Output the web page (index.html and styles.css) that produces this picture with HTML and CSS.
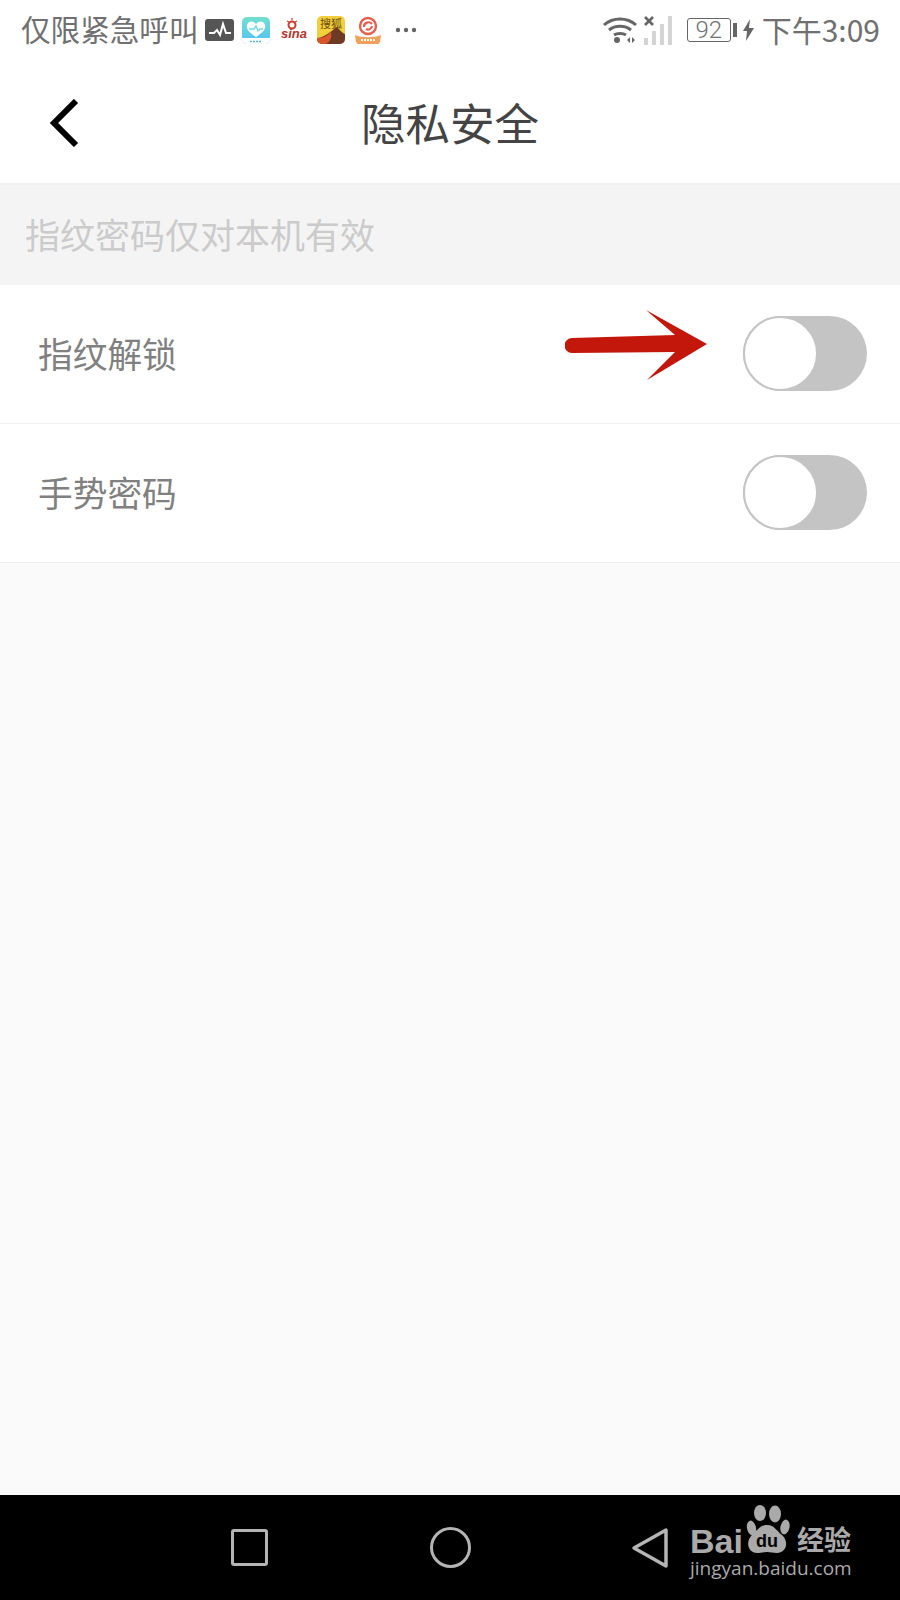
FILE: index.html
```html
<!DOCTYPE html>
<html>
  <head>
  <meta charset="utf-8">
  <title>隐私安全</title>
  <link rel="stylesheet" href="styles.css">
  </head>
  <body>
    <div class="phone">
      <div class="statusbar">
        <div class="status-left">
          <span class="carrier">仅限紧急呼叫</span>
          <svg class="ico-pulse" width="29" height="22" viewBox="0 0 29 22"><rect width="29" height="22" rx="3" fill="#555"/><path d="M4 14h5l3-3 3 5 3-11 3 9h5" fill="none" stroke="#fff" stroke-width="2"/></svg>
          <svg class="ico-heart" width="28" height="27" viewBox="0 0 28 27"><defs><linearGradient id="heartbg" x1="0" y1="0" x2="0" y2="1"><stop offset="0" stop-color="#72e0cc"/><stop offset="0.8" stop-color="#58c6f0"/></linearGradient></defs><rect width="28" height="27" rx="5" fill="url(#heartbg)"/><path d="M0 21h28v1a5 5 0 0 1-5 5H5a5 5 0 0 1-5-5z" fill="#fff"/><path d="M14 20C7 15 4 12 5 8c1-4 6-5 9-1 3-4 8-3 9 1 1 4-2 7-9 12z" fill="#fff"/><path d="M7 12h5l2-3 2 5 2-2h3" fill="none" stroke="#6fd8e0" stroke-width="1.4"/><path d="M8 24.500h12" stroke="#58b8d8" stroke-width="1.500" stroke-dasharray="2 1"/></svg>
          <svg class="ico-sina" width="26" height="24" viewBox="0 0 26 24"><circle cx="11" cy="7" r="3.500" fill="none" stroke="#cc3a2c" stroke-width="2"/><path d="M6 3l2 1M11 0v2M16 3l-2 1" stroke="#cc3a2c" stroke-width="1.200"/><text x="0" y="20" class="sina-text">sina</text></svg>
          <svg class="ico-sohu" width="28" height="28" viewBox="0 0 28 28"><rect width="28" height="28" rx="5" fill="#f3cf3e"/><path d="M0 22C7 22 14 15 20 11c3 3 5 6 8 7v5a5 5 0 0 1-5 5H5a5 5 0 0 1-5-5z" fill="#6e3a24"/><path d="M0 22c8 0 10-3 14-6 1 5 0 9-5 12H5a5 5 0 0 1-5-5z" fill="#d9562c"/><text x="14" y="12" class="sohu-text">搜狐</text></svg>
          <svg class="ico-fire" width="28" height="28" viewBox="0 0 28 28"><circle cx="14" cy="10" r="8" fill="none" stroke="#e2604c" stroke-width="2.400"/><path d="M10 11a4.500 4.500 0 0 1 8-3M18 10a4 4 0 0 1-6 3" fill="none" stroke="#e2604c" stroke-width="2.200"/><path d="M1 19c7 3 19 3 26 0l-1 7a3 3 0 0 1-3 2H5a3 3 0 0 1-3-2z" fill="#f0a05a"/><path d="M7 24h14" stroke="#fff" stroke-width="2" stroke-dasharray="2 1"/></svg>
          <svg class="ico-more" width="22" height="6" viewBox="0 0 22 6"><circle cx="3" cy="3" r="2.200"/><circle cx="11" cy="3" r="2.200"/><circle cx="19" cy="3" r="2.200"/></svg>
        </div>
        <div class="status-right">
          <svg class="ico-wifi" width="34" height="28" viewBox="0 0 34 28"><path d="M1 9c9-8 23-8 32 0M6 14c6-5 16-5 22 0M11 19c3-2 9-2 12 0" fill="none" stroke="#666" stroke-width="3"/><circle cx="14" cy="24" r="3" fill="#666"/><path d="M24 24l3-3v6zM29 21l3 3-3 3z" fill="#666"/></svg>
          <svg class="ico-signal" width="30" height="30" viewBox="0 0 30 30"><path d="M1 2l8 8M9 2l-8 8" stroke="#666" stroke-width="2.600"/><rect x="0" y="23" width="4" height="7" fill="#d4d4d4"/><rect x="8" y="16" width="4" height="14" fill="#d4d4d4"/><rect x="16" y="9" width="4" height="21" fill="#d4d4d4"/><rect x="24" y="1" width="4" height="29" fill="#d4d4d4"/></svg>
          <div class="battery"><span class="battery-body">92</span><span class="battery-cap"></span></div>
          <svg class="ico-bolt" width="11" height="22" viewBox="0 0 11 22"><path d="M7 0L0 12h4l-1 10 8-13H6z" fill="#666"/></svg>
          <span class="clock">下午3:09</span>
        </div>
      </div>

      <div class="navbar">
        <svg class="back" width="30" height="48" viewBox="0 0 30 48"><path d="M27 2L5 24l22 22" fill="none" stroke="#000" stroke-width="6"/></svg>
        <h1 class="title">隐私安全</h1>
      </div>

      <div class="hint">指纹密码仅对本机有效</div>

      <div class="row">
        <span class="label">指纹解锁</span>
        <svg class="arrow" width="146" height="74" viewBox="0 0 146 74"><path d="M7 31L110 28 81 3 142 37 82 73 110 45 7 46A7.500 7.500 0 0 1 7 31z" fill="#c4170c"/></svg>
        <div class="toggle"><div class="knob"></div></div>
      </div>
      <div class="row">
        <span class="label">手势密码</span>
        <div class="toggle"><div class="knob"></div></div>
      </div>

      <div class="blank"></div>

      <div class="navkeys">
        <span class="key-square"></span>
        <span class="key-circle"></span>
        <svg class="key-back" width="38" height="42" viewBox="0 0 38 42"><path d="M35 3v36L3 21z" fill="none" stroke="#b4b4b4" stroke-width="3.500" stroke-linejoin="round"/></svg>
        <div class="watermark">
          <div class="wm-top">
            <span class="wm-bai">Bai</span>
            <svg class="wm-paw" width="44" height="48" viewBox="0 0 44 48"><ellipse cx="5.500" cy="23" rx="4.500" ry="7.500" fill="#aaa" transform="rotate(-12 5.500 23)"/><ellipse cx="14" cy="8" rx="6" ry="8" fill="#aaa"/><ellipse cx="29" cy="9" rx="6" ry="8.500" fill="#aaa"/><ellipse cx="39" cy="22" rx="4.500" ry="7.500" fill="#aaa" transform="rotate(12 39 22)"/><path d="M21 20c7 0 9 5 15 10 7 6 5 18-5 18-4 0-6-1-10-1s-6 1-10 1C2 48-1 37 6 30c6-5 8-10 15-10z" fill="#aaa"/><text x="21" y="42" class="wm-du">du</text></svg>
            <span class="wm-cn">经验</span>
          </div>
          <div class="wm-url">jingyan.baidu.com</div>
        </div>
      </div>
    </div>
  </body>
</html>
```

FILE: styles.css
```css
html, body {
  margin: 0;
  padding: 0;
}
body {
  font-family: "Noto Sans CJK SC", "Liberation Sans", sans-serif;
}
.phone {
  width: 900px;
  height: 1600px;
  display: flex;
  flex-direction: column;
  background: #fafafa;
  overflow: hidden;
}

/* status bar */
.statusbar {
  height: 60px;
  flex: none;
  background: #fff;
  display: flex;
  justify-content: space-between;
  align-items: center;
  padding: 0 20px 0 21px;
  color: #707070;
}
.status-left, .status-right {
  display: flex;
  align-items: center;
}
.carrier {
  font-size: 29.600px;
  line-height: 40px;
  margin: -2px 6px 0 0;
}
.ico-heart { margin-left: 8px; }
.ico-sina { margin-left: 11px; }
.ico-sohu { margin-left: 10px; }
.ico-fire { margin-left: 9px; }
.ico-more { margin-left: 13px; fill: #666; }
.sina-text {
  font-family: "Liberation Sans", sans-serif;
  font-size: 13px;
  font-style: italic;
  font-weight: bold;
  fill: #b5342a;
}
.sohu-text {
  font-size: 11px;
  text-anchor: middle;
  fill: #6a4a10;
}
.ico-signal { margin-left: 7px; }
.battery {
  display: flex;
  align-items: center;
  margin-left: 13px;
}
.battery-body {
  width: 42px;
  height: 22px;
  border: 1.500px solid #666;
  border-radius: 3px;
  font-family: Roboto, sans-serif;
  font-weight: 300;
  font-size: 24px;
  line-height: 22px;
  text-align: center;
}
.battery-cap {
  width: 4px;
  height: 14px;
  margin-left: 2px;
  background: #666;
}
.ico-bolt { margin-left: 6px; }
.clock {
  font-size: 30px;
  line-height: 40px;
  margin: -2px 0 0 8px;
}

/* title */
.navbar {
  height: 123px;
  flex: none;
  position: relative;
  background: #fff;
  border-bottom: 2px solid #efefef;
  display: flex;
  align-items: center;
  justify-content: center;
}
.back {
  position: absolute;
  left: 49px;
  top: 39px;
}
.title {
  margin: 0;
  font-size: 44.500px;
  font-weight: normal;
  color: #444;
}

.hint {
  height: 100px;
  flex: none;
  background: #f4f4f4;
  padding-left: 25px;
  font-size: 35px;
  line-height: 97px;
  color: #cbcbcb;
}

/* rows */
.row {
  height: 139px;
  flex: none;
  box-sizing: border-box;
  position: relative;
  background: #fff;
  border-bottom: 1px solid #efefef;
  display: flex;
  align-items: center;
  justify-content: space-between;
  padding: 0 33px 2px 38px;
}
.label {
  font-size: 34.700px;
  color: #808080;
}
.arrow {
  position: absolute;
  left: 565px;
  top: 22px;
}
.toggle {
  width: 124px;
  height: 75px;
  border-radius: 38px;
  background: #c4c4c4;
}
.knob {
  width: 75px;
  height: 75px;
  box-sizing: border-box;
  border: 2px solid #c4c4c4;
  border-radius: 50%;
  background: #fff;
}

.blank {
  flex: 1;
}

/* bottom keys */
.navkeys {
  height: 105px;
  flex: none;
  position: relative;
  background: #000;
  display: flex;
  align-items: center;
}
.key-square {
  width: 37px;
  height: 37px;
  margin-left: 231px;
  border: 3.500px solid #b4b4b4;
  border-radius: 3px;
  box-sizing: border-box;
}
.key-circle {
  width: 41px;
  height: 41px;
  margin-left: 162px;
  border: 3.500px solid #b4b4b4;
  border-radius: 50%;
  box-sizing: border-box;
}
.key-back {
  margin-left: 160px;
}
.watermark {
  position: absolute;
  left: 690px;
  top: 10px;
  color: #aaa;
}
.wm-top {
  display: flex;
  align-items: flex-end;
  height: 53px;
}
.wm-bai {
  font-family: "Liberation Sans", sans-serif;
  font-weight: bold;
  font-size: 34px;
  line-height: 34px;
}
.wm-paw {
  margin: 0 0 5px 3px;
}
.wm-du {
  font-family: "Liberation Sans", sans-serif;
  font-size: 18px;
  font-weight: bold;
  text-anchor: middle;
  fill: #000;
}
.wm-cn {
  font-size: 27px;
  font-weight: bold;
  line-height: 30px;
  margin: 0 0 4px 7px;
}
.wm-url {
  font-family: "Open Sans", sans-serif;
  font-size: 19px;
  line-height: 20px;
}
```
